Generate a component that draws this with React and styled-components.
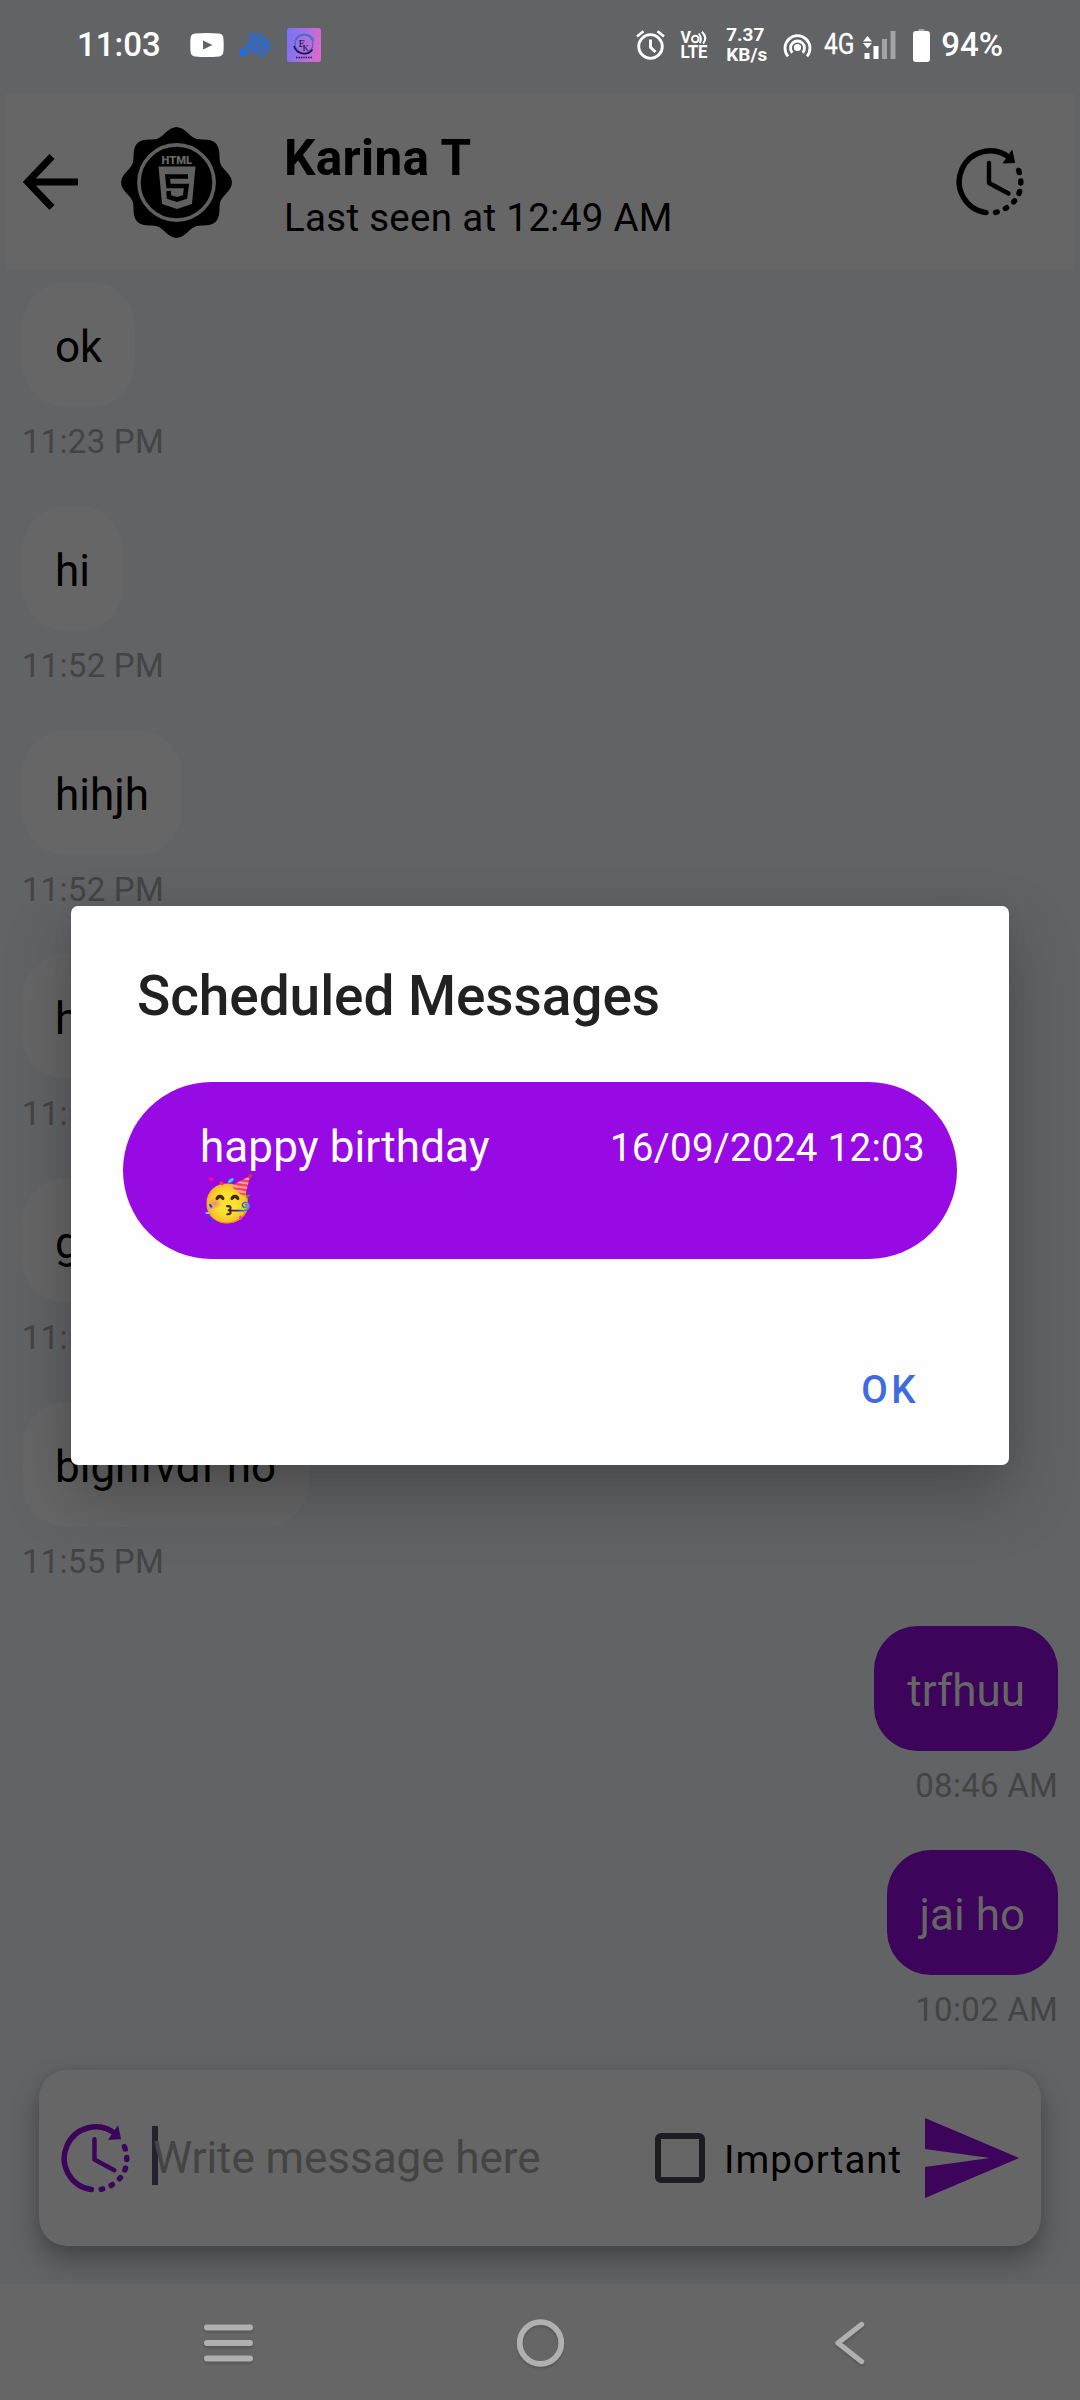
import React from 'react';
import styled, { createGlobalStyle } from 'styled-components';

const Global = createGlobalStyle`
  html, body { margin: 0; padding: 0; }
  body { width: 1080px; height: 2400px; overflow: hidden; background: #616264; }
  * { box-sizing: border-box; }
`;

const Screen = styled.div`
  position: relative;
  width: 1080px;
  height: 2400px;
  display: flex;
  flex-direction: column;
  background: #616365;
  font-family: Roboto, 'Noto Sans', sans-serif;
  overflow: hidden;
`;

/* Status bar */
const StatusBar = styled.div`
  flex: none;
  height: 94px;
  padding: 0 77px 4px 77px;
  display: flex;
  justify-content: space-between;
  align-items: center;
  color: #fff;
`;
const StatusGroup = styled.div`
  display: flex;
  align-items: center;
  height: 90px;
`;
const StatusText = styled.span`
  font-size: 33px;
  font-weight: 500;
  line-height: 36px;
  margin-left: ${(p) => p.$ml || 0}px;
  white-space: nowrap;
`;
const StatusIcon = styled.svg`
  display: block;
  flex: none;
  margin-left: ${(p) => p.$ml || 0}px;
`;
const Stack = styled.div`
  display: flex;
  flex-direction: column;
  width: ${(p) => p.$w}px;
  margin-left: ${(p) => p.$ml}px;
  font-size: ${(p) => p.$size}px;
  line-height: ${(p) => p.$lh}px;
  font-weight: 700;
  white-space: nowrap;
`;

/* Header */
const Header = styled.header`
  flex: none;
  height: 176px;
  margin: 0 6px;
  padding: 0 50px 0 17px;
  display: flex;
  align-items: center;
  background: #666;
`;
const Avatar = styled.svg`
  flex: none;
  display: block;
  margin-left: 43px;
`;
const Contact = styled.div`
  flex: 1;
  margin-left: 52px;
  padding-top: 9px;
`;
const Name = styled.div`
  font-size: 49.5px;
  line-height: 62px;
  font-weight: 700;
  letter-spacing: 0.3px;
  color: #000;
`;
const Seen = styled.div`
  font-size: 38.5px;
  line-height: 57px;
  letter-spacing: 0.3px;
  color: #000;
`;
const Icon = styled.svg`
  display: block;
  flex: none;
`;

/* Conversation */
const Messages = styled.main`
  flex: none;
  height: 1800px;
  padding: 12px 22px 0;
  display: flex;
  flex-direction: column;
  overflow: hidden;
`;
const Message = styled.div`
  flex: none;
  height: 224px;
  display: flex;
  flex-direction: column;
  align-items: ${(p) => (p.$mine ? 'flex-end' : 'flex-start')};
`;
const Bubble = styled.div`
  height: 125px;
  padding: 0 33px;
  border-radius: 44px;
  background: ${(p) => (p.$mine ? '#3c045b' : '#666')};
  color: ${(p) => (p.$mine ? '#666' : '#000')};
  font-size: 44px;
  line-height: 131px;
  white-space: nowrap;
`;
const Time = styled.div`
  margin-top: 15px;
  font-size: 33px;
  line-height: 40px;
  letter-spacing: 0.25px;
  color: #444;
`;

/* Composer */
const Composer = styled.div`
  flex: none;
  height: 176px;
  margin: 0 39px 38px;
  padding: 0 22px;
  display: flex;
  align-items: center;
  background: #666;
  border-radius: 28px;
  box-shadow: 0 14px 28px rgba(0, 0, 0, 0.3), 0 0 10px rgba(0, 0, 0, 0.06);
`;
const Field = styled.div`
  display: flex;
  align-items: center;
  width: 503px;
  margin-left: 22px;
`;
const Caret = styled.span`
  width: 6px;
  height: 59px;
  margin-right: -5px;
  margin-top: -5px;
  background: rgba(28, 25, 38, 0.88);
`;
const Placeholder = styled.span`
  font-size: 44px;
  line-height: 56px;
  letter-spacing: -0.05px;
  color: #444;
  white-space: nowrap;
`;
const Checkbox = styled.span`
  flex: none;
  width: 50px;
  height: 50px;
  border: 6px solid #1e1c23;
  border-radius: 6px;
`;
const CheckLabel = styled.span`
  width: 201px;
  margin-left: 19px;
  padding-top: 3px;
  font-size: 38.5px;
  line-height: 50px;
  letter-spacing: 1px;
  color: #000;
  white-space: nowrap;
`;

/* Navigation bar */
const NavBar = styled.nav`
  flex: none;
  height: 116px;
  padding: 0 204px 0 203px;
  display: flex;
  justify-content: space-between;
  align-items: center;
  background: #666;
`;
const NavIcon = styled.svg`
  display: block;
  margin-top: 1px;
  filter: drop-shadow(0 2px 1px rgba(0, 0, 0, 0.15));
`;

/* Dialog */
const Overlay = styled.div`
  position: absolute;
  inset: 0;
  padding-top: 906px;
  display: flex;
  justify-content: center;
  align-items: flex-start;
`;
const Dialog = styled.section`
  width: 938px;
  height: 559px;
  padding: 57px 52px 43px;
  display: flex;
  flex-direction: column;
  background: #fefefe;
  border-radius: 7px;
  box-shadow: 0 30px 66px rgba(0, 0, 0, 0.25), 0 0 22px rgba(0, 0, 0, 0.06);
`;
const Title = styled.h1`
  margin: 0 0 52px 14px;
  font-size: 55px;
  line-height: 67px;
  font-weight: 500;
  letter-spacing: -0.08px;
  color: #212121;
`;
const Scheduled = styled.div`
  flex: none;
  height: 177px;
  padding: 39px 32px 0 77px;
  display: flex;
  justify-content: space-between;
  align-items: flex-start;
  border-radius: 89px;
  background: #970ae4;
  color: #fff;
`;
const ScheduledText = styled.div`
  width: 300px;
  font-size: 44px;
  line-height: 52px;
  letter-spacing: 0.1px;
`;
const ScheduledDate = styled.div`
  font-size: 38.5px;
  line-height: 54px;
  letter-spacing: 0.3px;
  white-space: nowrap;
`;
const Actions = styled.div`
  margin-top: auto;
  display: flex;
  justify-content: flex-end;
  padding-right: 38px;
`;
const OkButton = styled.button`
  border: 0;
  padding: 0;
  background: none;
  font: 500 38.5px/64px Roboto, sans-serif;
  letter-spacing: 3.4px;
  color: #4169e1;
`;

const Arrow = () => (
  <Icon width="55" height="56" viewBox="0 0 55 56">
    <path d="M29 2.5L4.5 28L29 53.5M4.5 28H55" fill="none" stroke="#000" strokeWidth="7" />
  </Icon>
);

const sealPoints = Array.from({ length: 144 }, (_, i) => {
  const a = (i / 144) * Math.PI * 2;
  const r = 51.6 + 3.8 * Math.cos(8 * a);
  return `${(55.5 + r * Math.sin(a)).toFixed(2)},${(55.5 - r * Math.cos(a)).toFixed(2)}`;
}).join(' ');

const Seal = () => (
  <Avatar width="111" height="111" viewBox="0 0 111 111">
    <polygon points={sealPoints} fill="#000" />
    <circle cx="55.5" cy="55.5" r="37.6" fill="none" stroke="#606060" strokeWidth="3.6" />
    <text x="40.5" y="37" fontFamily="Roboto, sans-serif" fontWeight="900" fontSize="11.5" textLength="30.5" lengthAdjust="spacingAndGlyphs" fill="#686868">HTML</text>
    <path d="M37.5 39.5H74.5L71 77L56 82L41 77Z" fill="#606060" />
    <path d="M67 49.5H46.5L47.5 59H65.5L64 70L56 72.5L48 70L47.5 64" fill="none" stroke="#000" strokeWidth="4.6" />
  </Avatar>
);

const ScheduleClock = ({ color, size = 68 }) => (
  <Icon width={size} height={size} viewBox="0 0 68 68">
    <g fill="none" stroke={color} strokeLinecap="round">
      <path d="M30 64.6A31 31 0 1 1 54 10" strokeWidth="5.4" />
      <path d="M33 15V35L52.5 45.5" strokeWidth="4.4" strokeLinejoin="round" />
      <path d="M62.6 22.4L63.3 24.6M64.8 33V35M63.6 43.4L63 45.4M58.6 52.8L57.6 54M50.6 59.7L49.4 60.5M41.2 64L39.6 64.4" strokeWidth="5.4" />
    </g>
    <path d="M56 2.5L58.6 14.5L47.3 15Z" fill={color} stroke={color} strokeWidth="1" />
  </Icon>
);

const Youtube = () => (
  <StatusIcon $ml={29} width="34" height="24" viewBox="0 0 34 24">
    <path d="M5 .6Q17-.4 29 .6Q33 1 33.4 5Q34 12 33.4 19Q33 23 29 23.4Q17 24.4 5 23.4Q1 23 .6 19Q0 12 .6 5Q1 1 5 .6Z" fill="#fff" />
    <path d="M13 7.500V16.500L22.5 12Z" fill="#616365" />
  </StatusIcon>
);
const BlueStripes = () => (
  <StatusIcon $ml={15} width="32" height="26" viewBox="0 0 32 26">
    <path d="M19.5 1.5L31 12.500M13 1.5L30 17M10.5 5L27 20.5M10 10L24 24.500M6.5 12.500L14.5 20.500" fill="none" stroke="#1a6ff0" strokeWidth="2.4" strokeLinecap="round" />
    <path d="M3.5 15.500L9.500 20.5Q7 24 4 24Q.5 24 .5 20Q.5 17.500 3.5 15.500Z" fill="#1a6ff0" />
  </StatusIcon>
);
const EkLogo = () => (
  <StatusIcon $ml={16} width="34" height="34" viewBox="0 0 34 34">
    <defs>
      <linearGradient id="ek" x1="0" x2="1" y1="0.3" y2="0.5">
        <stop offset="0" stopColor="#7774f8" />
        <stop offset="1" stopColor="#da69cc" />
      </linearGradient>
    </defs>
    <rect width="34" height="34" rx="2.5" fill="url(#ek)" />
    <g fill="none">
      <circle cx="17" cy="16" r="9" stroke="#3d66b8" strokeWidth="1.1" />
      <path d="M8 13A10 10 0 0 1 27 13" stroke="#3e78cc" strokeWidth="1.3" />
      <path d="M7 18A10.5 10.5 0 0 0 25.5 21.5" stroke="#1b1440" strokeWidth="1.5" />
    </g>
    <text x="11.5" y="18.5" fontFamily="Liberation Serif, serif" fontSize="11" fill="#1a1238">E</text>
    <text x="15.5" y="22.5" fontFamily="Liberation Serif, serif" fontSize="9" fill="#1a1238">K</text>
    <path d="M9 29.500H25.5" stroke="#2b1c50" strokeWidth="1.6" strokeDasharray="1.5 .9" />
  </StatusIcon>
);
const Alarm = () => (
  <StatusIcon width="29" height="30" viewBox="0 0 29 30">
    <g fill="none" stroke="#fff">
      <circle cx="14.5" cy="16.5" r="11.8" strokeWidth="2.8" />
      <path d="M1 6.500L7.500 1.300M28 6.500L21.500 1.300" strokeWidth="2.6" />
      <path d="M14.500 9.500V17.300L19.500 22" strokeWidth="2.900" />
    </g>
  </StatusIcon>
);
const Volte = () => (
  <StatusIcon $ml={15} width="29" height="40" viewBox="0 -6 29 40">
    <g fill="#fff" fontFamily="Roboto, sans-serif" fontWeight="700">
      <text x="0.5" y="12" fontSize="16">V</text>
      <text x="0.5" y="27.3" fontSize="17.5" textLength="27" lengthAdjust="spacingAndGlyphs">LTE</text>
    </g>
    <g fill="none" stroke="#fff" strokeWidth="2">
      <circle cx="15.3" cy="8" r="3.3" />
      <path d="M18.800 2.500Q22.300 7 19.800 12M22 .8Q28 7 23 12.500" />
    </g>
  </StatusIcon>
);
const Hotspot = () => (
  <StatusIcon $ml={16} width="29" height="25" viewBox="0 0 29 25">
    <g fill="none" stroke="#fff" strokeWidth="2.8">
      <path d="M5 23.300A12.500 12.500 0 1 1 24 23.300" />
      <path d="M9.300 19.700A7 7 0 1 1 19.700 19.700" />
    </g>
    <circle cx="14.5" cy="14.5" r="3.6" fill="#fff" />
  </StatusIcon>
);
const FourG = () => (
  <StatusIcon $ml={12} width="32" height="40" viewBox="0 0 32 40">
    <text x="0" y="29" fontFamily="Roboto, sans-serif" fontSize="29" textLength="30.500" lengthAdjust="spacingAndGlyphs" fill="#fff" stroke="#fff" strokeWidth="0.3">4G</text>
  </StatusIcon>
);
const Signal = () => (
  <StatusIcon $ml={7} width="33" height="28" viewBox="0 0 33 28">
    <path d="M4.500 5L9 10.500H0ZM4.500 17.500L0 12H9ZM1.500 22H6.500V28H1.500ZM10.500 15H15.500V28H10.500Z" fill="#fff" />
    <path d="M19 8H24V28H19ZM27.500 0H32.500V28H27.500Z" fill="#a3a4a5" />
  </StatusIcon>
);
const Battery = () => (
  <StatusIcon $ml={17} width="17" height="33" viewBox="0 0 17 33">
    <path d="M6 0H11L12.500 3H4.500Z" fill="#a8a8a8" />
    <rect y="2" width="17" height="31" rx="3" fill="#fff" />
  </StatusIcon>
);

const messages = [
  { text: 'ok', time: '11:23 PM' },
  { text: 'hi', time: '11:52 PM' },
  { text: 'hihjh', time: '11:52 PM' },
  { text: 'hi', time: '11:53 PM' },
  { text: 'gd', time: '11:54 PM' },
  { text: 'bighfvdf ho', time: '11:55 PM' },
  { text: 'trfhuu', time: '08:46 AM', mine: true },
  { text: 'jai ho', time: '10:02 AM', mine: true },
];

export default function App() {
  return (
    <Screen>
      <Global />
      <StatusBar>
        <StatusGroup>
          <StatusText>11:03</StatusText>
          <Youtube />
          <BlueStripes />
          <EkLogo />
        </StatusGroup>
        <StatusGroup>
          <Alarm />
          <Volte />
          <Stack $w={41} $ml={17} $size={19} $lh={20}>
            <span>7.37</span>
            <span>KB/s</span>
          </Stack>
          <Hotspot />
          <FourG />
          <Signal />
          <Battery />
          <StatusText $ml={11}>94%</StatusText>
        </StatusGroup>
      </StatusBar>

      <Header>
        <Arrow />
        <Seal />
        <Contact>
          <Name>Karina T</Name>
          <Seen>Last seen at 12:49 AM</Seen>
        </Contact>
        <ScheduleClock color="#000" />
      </Header>

      <Messages>
        {messages.map((m) => (
          <Message key={m.text + m.time} $mine={m.mine}>
            <Bubble $mine={m.mine}>{m.text}</Bubble>
            <Time>{m.time}</Time>
          </Message>
        ))}
      </Messages>

      <Composer>
        <ScheduleClock color="#3c045b" size={69} />
        <Field>
          <Caret />
          <Placeholder>Write message here</Placeholder>
        </Field>
        <Checkbox />
        <CheckLabel>Important</CheckLabel>
        <Icon width="94" height="80" viewBox="0 0 94 80">
          <path d="M0 0L94 40L0 80V49L65 40L0 31Z" fill="#3c045b" />
        </Icon>
      </Composer>

      <NavBar>
        <NavIcon width="50" height="48" viewBox="0 0 50 48">
          <path d="M4 8.500H47M4 24H47M4 39.500H47" stroke="#b0b0b0" strokeWidth="6" strokeLinecap="round" />
        </NavIcon>
        <NavIcon width="50" height="50" viewBox="0 0 50 50">
          <circle cx="25.5" cy="25" r="20.8" fill="none" stroke="#b0b0b0" strokeWidth="5.8" />
        </NavIcon>
        <NavIcon width="50" height="50" viewBox="0 0 50 50">
          <path d="M35.500 6.500L12 25L35.500 43.500" fill="none" stroke="#b0b0b0" strokeWidth="5.4" strokeLinecap="round" strokeLinejoin="round" />
        </NavIcon>
      </NavBar>

      <Overlay>
        <Dialog>
          <Title>Scheduled Messages</Title>
          <Scheduled>
            <ScheduledText>happy birthday 🥳</ScheduledText>
            <ScheduledDate>16/09/2024 12:03</ScheduledDate>
          </Scheduled>
          <Actions>
            <OkButton>OK</OkButton>
          </Actions>
        </Dialog>
      </Overlay>
    </Screen>
  );
}
